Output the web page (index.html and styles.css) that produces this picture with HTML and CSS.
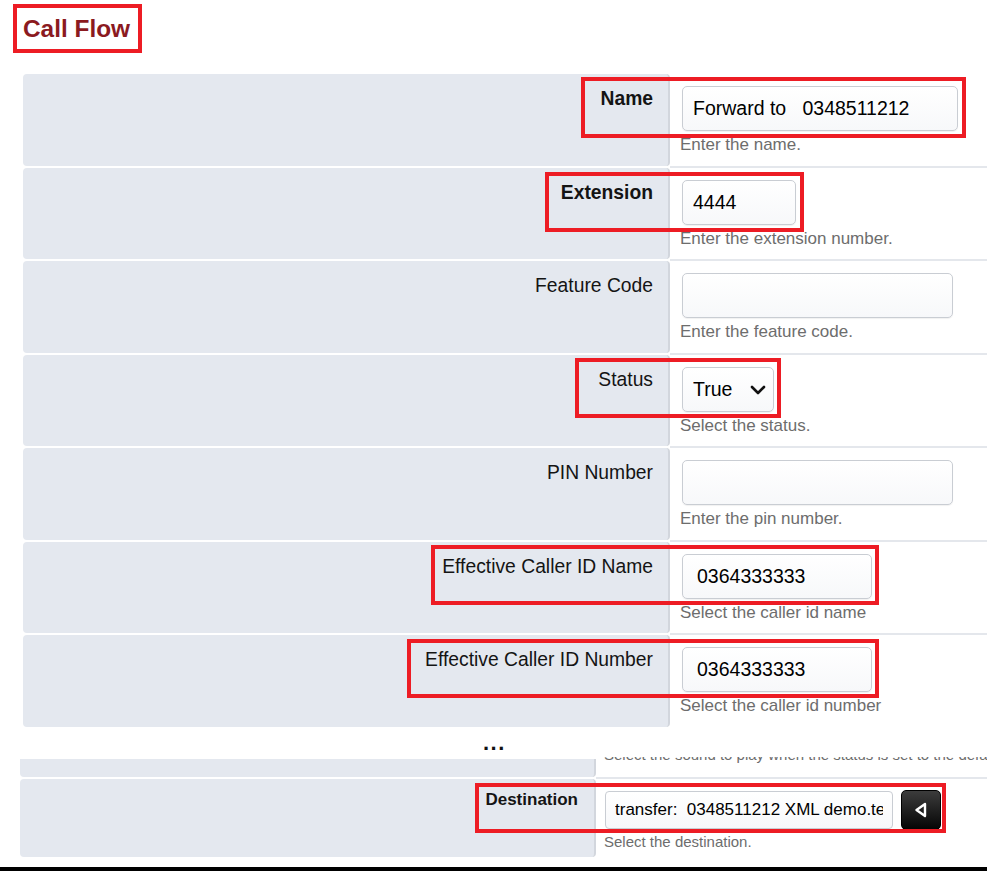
FILE: index.html
```html
<!DOCTYPE html>
<html lang="en">
<head>
<meta charset="utf-8">
<title>Call Flow</title>
<link rel="stylesheet" href="styles.css">
</head>
<body>
<header class="page-head">
  <h1 class="title">Call Flow</h1>
</header>

<div class="form">
  <div class="row">
    <div class="label strong">Name</div>
    <div class="field">
      <input class="inp w-name" type="text" value="Forward to   0348511212">
      <div class="help">Enter the name.</div>
    </div>
    <span class="mark mark-name"></span>
  </div>

  <div class="row">
    <div class="label strong">Extension</div>
    <div class="field">
      <input class="inp w-ext" type="text" value="4444">
      <div class="help">Enter the extension number.</div>
    </div>
    <span class="mark mark-ext"></span>
  </div>

  <div class="row">
    <div class="label">Feature Code</div>
    <div class="field">
      <input class="inp w-wide" type="text" value="">
      <div class="help">Enter the feature code.</div>
    </div>
  </div>

  <div class="row">
    <div class="label">Status</div>
    <div class="field">
      <div class="select-wrap">
        <select class="inp sel">
          <option>True</option>
          <option>False</option>
        </select>
        <svg class="chev" width="16" height="10" viewBox="0 0 16 10" aria-hidden="true"><path d="M2 2 L8 8 L14 2" fill="none" stroke="#111" stroke-width="2.6" stroke-linecap="round" stroke-linejoin="round"/></svg>
      </div>
      <div class="help">Select the status.</div>
    </div>
    <span class="mark mark-status"></span>
  </div>

  <div class="row">
    <div class="label">PIN Number</div>
    <div class="field">
      <input class="inp w-wide" type="text" value="">
      <div class="help">Enter the pin number.</div>
    </div>
  </div>

  <div class="row">
    <div class="label">Effective Caller ID Name</div>
    <div class="field">
      <input class="inp w-cid" type="text" value="0364333333">
      <div class="help">Select the caller id name</div>
    </div>
    <span class="mark mark-cidname"></span>
  </div>

  <div class="row last">
    <div class="label">Effective Caller ID Number</div>
    <div class="field">
      <input class="inp w-cid" type="text" value="0364333333">
      <div class="help">Select the caller id number</div>
    </div>
    <span class="mark mark-cidnum"></span>
  </div>
</div>

<div class="ellipsis">...</div>

<div class="fragment">
  <div class="frow partial">
    <div class="flabel"></div>
    <div class="ffield">
      <div class="fhelp cut">Select the sound to play when the status is set to the default.</div>
    </div>
  </div>
  <div class="frow dest">
    <div class="flabel strong">Destination</div>
    <div class="ffield">
      <div class="dest-group">
        <input class="finp" type="text" value="transfer:  0348511212 XML demo.test">
        <button class="dest-btn" type="button" aria-label="Select">
          <svg width="18" height="18" viewBox="0 0 18 18" aria-hidden="true"><path d="M13 3 L4.5 9 L13 15 Z" fill="none" stroke="#fff" stroke-width="2.4" stroke-linejoin="round"/></svg>
        </button>
      </div>
      <div class="fhelp">Select the destination.</div>
    </div>
    <span class="mark mark-dest"></span>
  </div>
</div>

<div class="bottom-bar"></div>
</body>
</html>
```

FILE: styles.css
```css
* { box-sizing: border-box; }

html, body {
  margin: 0;
  padding: 0;
  background: #ffffff;
  font-family: "Liberation Sans", Arial, sans-serif;
  color: #111111;
}

body {
  width: 987px;
  height: 871px;
  overflow: hidden;
}

.page-head {
  padding: 4px 0 0 13px;
  height: 74px;
}

.title {
  display: inline-block;
  margin: 0;
  border: 4px solid #ed1c24;
  padding: 6px 8px 6px 6px;
  font-size: 24.4px;
  line-height: 29px;
  font-weight: bold;
  color: #8b1a1f;
}

.form {
  padding-left: 23px;
}

.row {
  position: relative;
  display: grid;
  grid-template-columns: 647px 1fr;
  height: 93.5px;
}

.label {
  height: 91.5px;
  background: #e4e8ef;
  border-right: 2px solid #d2d6dd;
  border-radius: 4px;
  padding: 14px 15px 0 0;
  text-align: right;
  font-size: 19.3px;
  line-height: 22px;
  color: #141414;
}

.strong { font-weight: bold; }

.field {
  border-bottom: 2px solid #e4e7ec;
  padding: 12px 0 0 10px;
}

.row.last .field {
  border-bottom-color: transparent;
}

.inp {
  display: block;
  margin: 0 0 0 2px;
  height: 45px;
  border: 1px solid #c9cdd3;
  border-radius: 5px;
  background: linear-gradient(#ffffff, #f7f8fa);
  box-shadow: 0 1px 1px rgba(0, 0, 0, 0.06);
  padding: 0 10px;
  font-family: "Liberation Sans", Arial, sans-serif;
  font-size: 19.5px;
  color: #000000;
  outline: none;
}

.w-name { width: 276px; }
.w-ext { width: 114px; }
.w-wide { width: 271px; }
.w-cid { width: 190px; padding-left: 14px; }

.select-wrap {
  position: relative;
  width: 94px;
}

.sel {
  width: 92px;
  -webkit-appearance: none;
  appearance: none;
  padding-left: 10px;
}

.chev {
  position: absolute;
  left: 70px;
  top: 18px;
  pointer-events: none;
}

.help {
  margin-top: 4px;
  font-size: 17px;
  line-height: 20px;
  color: #6d6d6d;
}

.mark {
  position: absolute;
  border: 4px solid #ed1c24;
  pointer-events: none;
}

.mark-name { left: 558px; top: 3px; width: 385px; height: 61px; }
.mark-ext { left: 522px; top: 4px; width: 259px; height: 60px; }
.mark-status { left: 552px; top: 3px; width: 206px; height: 60px; }
.mark-cidname { left: 408px; top: 3px; width: 448px; height: 60px; }
.mark-cidnum { left: 384px; top: 4px; width: 472px; height: 59px; }
.mark-dest { left: 455px; top: 4px; width: 471px; height: 50px; }

.ellipsis {
  height: 28.5px;
  padding-left: 483px;
  font-size: 22px;
  line-height: 28px;
  font-weight: bold;
  letter-spacing: 1.5px;
  color: #111111;
}

.fragment {
  padding-left: 20px;
}

.frow {
  position: relative;
  display: grid;
  grid-template-columns: 576px 1fr;
}

.flabel {
  background: #e4e8ef;
  border-right: 2px solid #d2d6dd;
  border-radius: 4px;
  padding: 11px 16px 0 0;
  text-align: right;
  font-size: 17px;
  line-height: 20px;
  color: #141414;
}

.ffield {
  padding: 11px 0 0 9px;
  overflow: hidden;
}

.partial {
  height: 22px;
}

.partial .flabel {
  height: 18px;
  margin-top: 2px;
  border-radius: 0 0 4px 4px;
}

.partial .ffield {
  padding: 0 0 0 8px;
  height: 22px;
  border-bottom: 2px solid #e4e7ec;
}

.fhelp {
  font-size: 15px;
  line-height: 18px;
  color: #6d6d6d;
  white-space: nowrap;
}

.fhelp.cut {
  margin-top: -11px;
}

.dest {
  height: 78px;
}

.dest-group {
  display: flex;
  align-items: center;
  gap: 8px;
}

.finp {
  width: 288px;
  height: 38px;
  border: 1px solid #c9cdd3;
  border-radius: 4px;
  background: linear-gradient(#ffffff, #f7f8fa);
  padding: 0 9px;
  font-family: "Liberation Sans", Arial, sans-serif;
  font-size: 17px;
  color: #000000;
  outline: none;
}

.dest-btn {
  width: 40px;
  height: 40px;
  display: flex;
  align-items: center;
  justify-content: center;
  padding: 0;
  border: 1px solid #000000;
  border-radius: 5px;
  background: linear-gradient(#3c3c3c, #050505);
  cursor: pointer;
}

.dest .fhelp {
  margin-top: 3px;
  margin-left: -1px;
}

.bottom-bar {
  margin-top: 10px;
  height: 6px;
  background: #000000;
}
```
